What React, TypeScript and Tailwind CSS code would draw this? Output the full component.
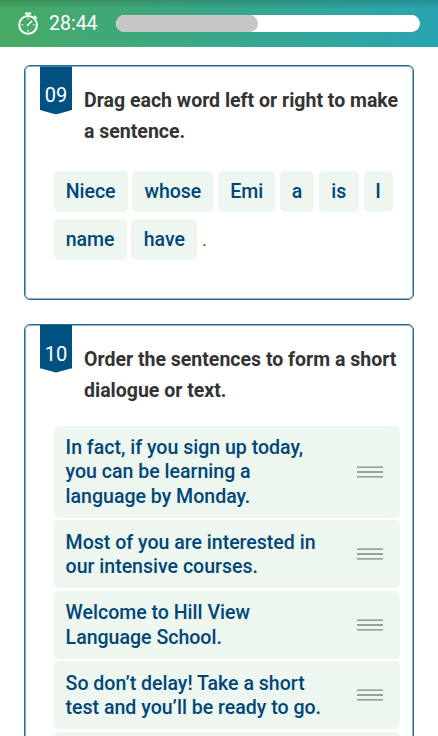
import React from "react";

const words: { text: string; width: string }[] = [
  { text: "Niece", width: "w-[74px]" },
  { text: "whose", width: "w-[81px]" },
  { text: "Emi", width: "w-[57px]" },
  { text: "a", width: "w-[34px]" },
  { text: "is", width: "w-[40px]" },
  { text: "I", width: "w-[29px]" },
  { text: "name", width: "w-[73px]" },
  { text: "have", width: "w-[66px]" },
];

const sentences: { lines: string[]; size: string }[] = [
  { lines: ["In fact, if you sign up today,", "you can be learning a", "language by Monday."], size: "h-[92px]" },
  { lines: ["Most of you are interested in", "our intensive courses."], size: "h-[68px]" },
  { lines: ["Welcome to Hill View", "Language School."], size: "h-[68px]" },
  { lines: ["So don’t delay! Take a short", "test and you’ll be ready to go."], size: "h-[68px]" },
  { lines: ["", ""], size: "h-[68px]" },
];

function Stopwatch() {
  return (
    <svg className="h-6 w-[22px] shrink-0" viewBox="0 0 22 24" fill="none" stroke="white">
      <circle cx="10.1" cy="12.9" r="8.9" strokeWidth="2" />
      <path d="M7 1.5h6.2M10.1 1.5v2.6" strokeWidth="2" />
      <path d="M16 3.8l2.8 2.6" strokeWidth="1.7" />
      <path d="M10.1 5.5v2.2M10.1 17.8v2.2M3 12.9h2.4M14.8 12.9h2.4" strokeWidth="0.9" />
      <path d="M9 14l5.2-5.2" strokeWidth="1.5" />
    </svg>
  );
}

function Card({ number, title, className, children }: { number: string; title: string[]; className: string; children: React.ReactNode }) {
  return (
    <section className={`ml-6 w-[390px] rounded-[6px] border border-[#2b6893] bg-white p-px shadow-[inset_0_0_0_1px_#8fb1c8] ${className}`}>
      <div className="flex">
        <div className="-mt-px ml-[14px] h-[48px] w-8 shrink-0 bg-[#005180] pt-[15px] text-center text-[20px] leading-7 text-white [clip-path:polygon(0_0,100%_0,100%_91%,50%_100%,0_91%)]">
          {number}
        </div>
        <h2 className="ml-3 pt-[18px] text-[19.5px] leading-[31px] font-bold whitespace-nowrap text-[#333]">
          {title.map((line) => (
            <span key={line} className="block">{line}</span>
          ))}
        </h2>
      </div>
      {children}
    </section>
  );
}

export default function App() {
  return (
    <div className="h-[736px] overflow-hidden bg-white font-[Roboto,sans-serif]">
      <header className="flex h-[47px] items-center bg-[linear-gradient(180deg,rgba(0,0,0,.15),transparent_9px),linear-gradient(100deg,#48aa63,#29a5b3)] pl-[18px]">
        <Stopwatch />
        <span className="ml-[9px] w-[66.5px] text-[19.5px] leading-6 text-white">28:44</span>
        <div className="h-[17px] w-[304.5px] overflow-hidden rounded-full bg-white">
          <div className="h-full w-[142.5px] rounded-full bg-[#c7c6c4]" />
        </div>
      </header>
      <Card number="09" title={["Drag each word left or right to make", "a sentence."]} className="mt-[18.4px] h-[234.2px]">
        <div className="mt-[23.6px] ml-[27.6px] flex w-[350px] flex-wrap gap-x-[4.8px] gap-y-[7.5px]">
          {words.map((word) => (
            <button key={word.text} className={`h-[41px] rounded-[5px] bg-[#edf6ef] text-[19.5px] font-medium text-[#004677] ${word.width}`}>
              {word.text}
            </button>
          ))}
          <span className="pt-[9px] text-[17px] leading-6 text-[#333]">.</span>
        </div>
      </Card>
      <Card number="10" title={["Order the sentences to form a short", "dialogue or text."]} className="mt-[24px] h-[480px]">
        <ul className="mt-[20.4px] ml-[27.6px] w-[346.4px] space-y-[2.5px]">
          {sentences.map((item, index) => (
            <li key={index} className={`flex items-center justify-between rounded-[5px] bg-[#edf6ef] pr-[16.5px] pl-3 ${item.size}`}>
              <p className="pt-[1.2px] text-[19.55px] leading-[24.3px] font-medium whitespace-nowrap text-[#004677]">
                {item.lines.map((line, i) => (
                  <span key={i} className="block">{line}</span>
                ))}
              </p>
              <svg className="h-3 w-[26px]" viewBox="0 0 26 12" stroke="#7d857f" strokeWidth="1.3">
                <path d="M0 1.2h26M0 6h26M0 10.8h26" />
              </svg>
            </li>
          ))}
        </ul>
      </Card>
    </div>
  );
}
